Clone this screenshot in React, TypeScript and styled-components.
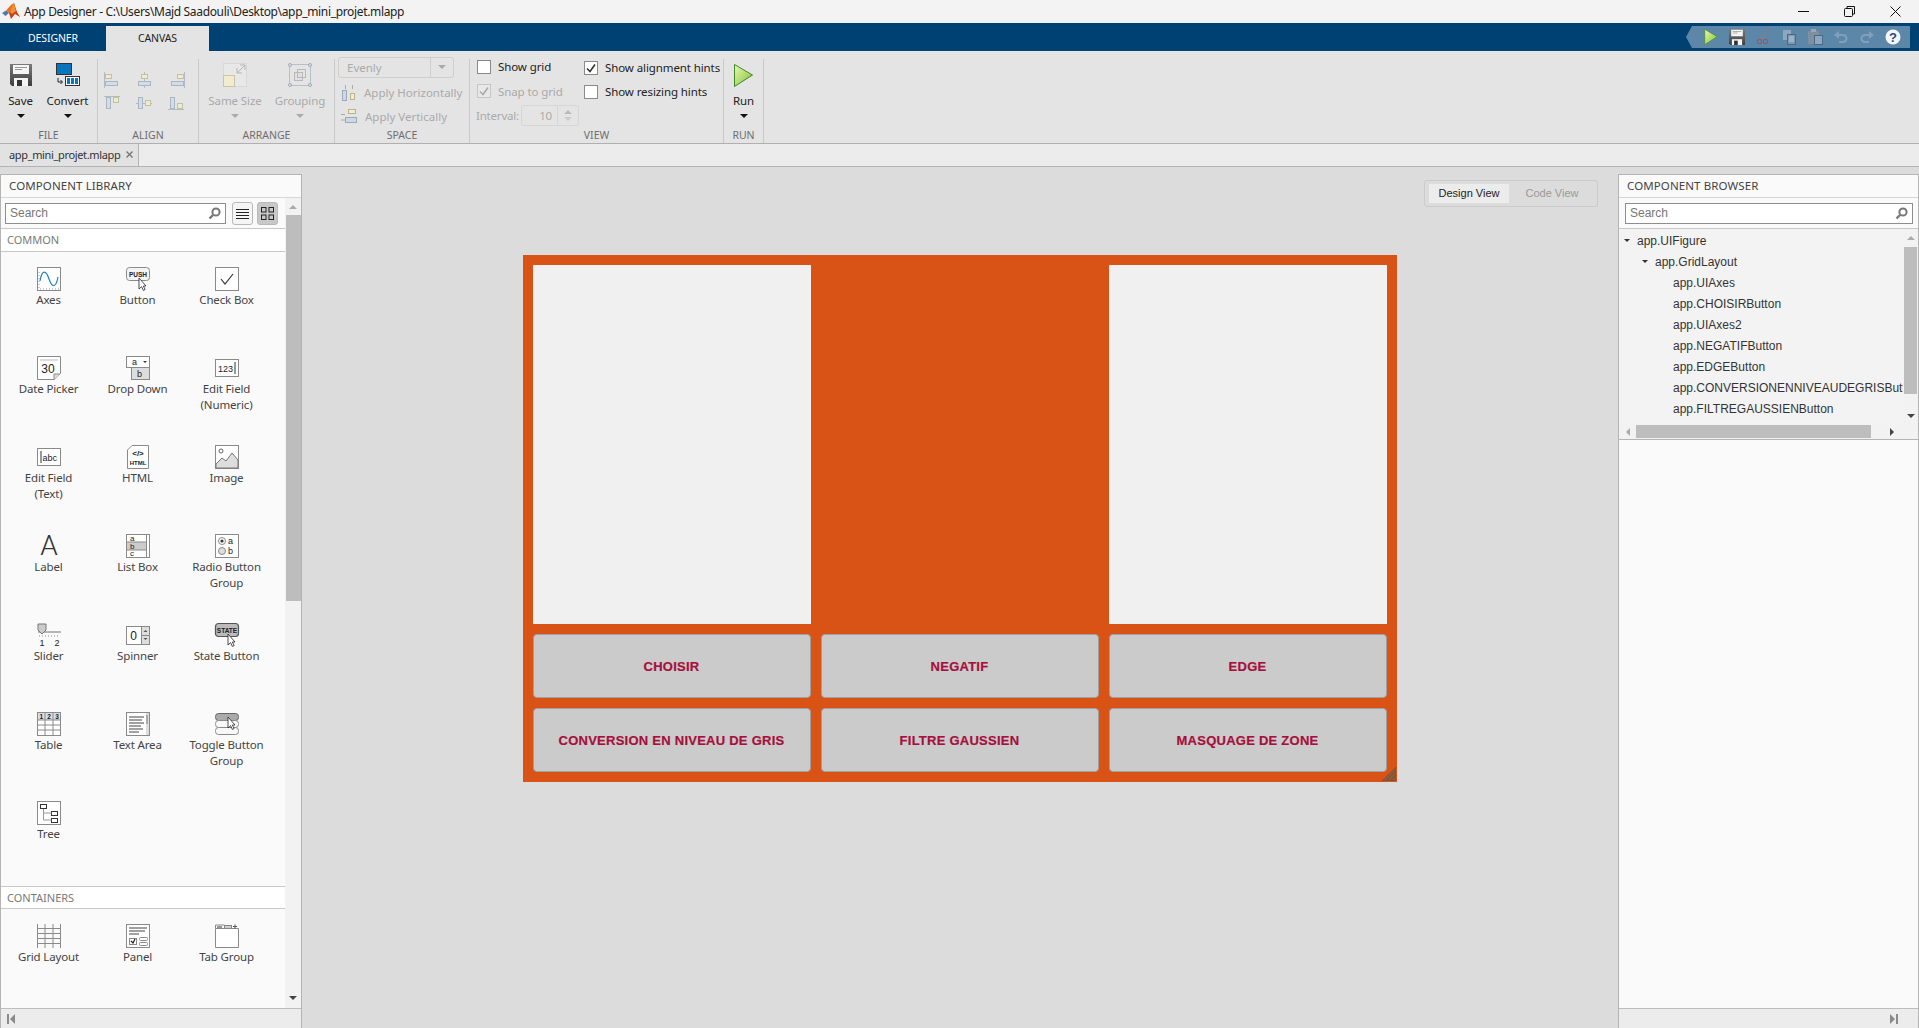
import React from "react";
import styled, { createGlobalStyle } from "styled-components";

const GlobalStyle = createGlobalStyle`
  html, body { margin: 0; padding: 0; overflow: hidden; background: #dcdcdc; }
  * { box-sizing: border-box; }
`;

const ui = `"Noto Sans", "Open Sans", sans-serif`;
const arial = `"Liberation Sans", Arial, sans-serif`;

// ------------------- SHELL ------------------------------------

const Page = styled.div`
  width: 1919px;
  height: 1028px;
  display: flex;
  flex-direction: column;
  overflow: hidden;
  font-family: ${ui};
  font-size: 12px;
  color: #222;
`;

const TitleBar = styled.div`
  height: 23px;
  flex: none;
  display: flex;
  align-items: center;
  background: #f3f3f3;
  padding-left: 2px;
`;

const TitleText = styled.span`
  margin-left: 4px;
  font-size: 12px;
  letter-spacing: -0.34px;
  color: #222;
  white-space: nowrap;
`;

const WindowControls = styled.div`
  margin-left: auto;
  display: flex;
  align-items: center;
  height: 100%;
  padding-right: 1px;
`;

const WindowButton = styled.div`
  width: 46px;
  height: 100%;
  display: flex;
  align-items: center;
  justify-content: center;
`;

const TabBar = styled.div`
  height: 28px;
  flex: none;
  display: flex;
  align-items: flex-end;
  background: #004173;
`;

const TabItem = styled.div<{ $active?: boolean; $w: number }>`
  width: ${({ $w }) => $w}px;
  height: 25px;
  display: flex;
  align-items: center;
  justify-content: center;
  padding-bottom: 2px;
  font-size: 10.5px;
  letter-spacing: -0.1px;
  color: ${({ $active }) => ($active ? "#222" : "#fff")};
  background: ${({ $active }) => ($active ? "#e4e4e4" : "transparent")};
`;

const QuickBar = styled.div`
  position: relative;
  margin-left: auto;
  margin-right: 9px;
  margin-bottom: 3px;
  width: 218px;
  height: 22px;
  display: flex;
  align-items: center;
  padding-left: 6px;
  background: #5d87a9;
  &::before {
    content: "";
    position: absolute;
    left: -6px;
    top: 0;
    border-style: solid;
    border-width: 11px 6px 11px 0;
    border-color: transparent #5d87a9 transparent transparent;
  }
`;

const QuickSlot = styled.div`
  width: 26px;
  height: 22px;
  display: flex;
  align-items: center;
  justify-content: center;
`;

// ------------------- RIBBON ------------------------------------

const Ribbon = styled.div`
  height: 93px;
  flex: none;
  display: flex;
  background: #e4e4e4;
  border-bottom: 1px solid #b0b0b0;
`;

const Section = styled.div<{ $w: number }>`
  width: ${({ $w }) => $w}px;
  margin-top: 8px;
  display: flex;
  flex-direction: column;
  border-right: 1px solid #c9c9c9;
`;

const SectionBody = styled.div<{ $pad?: string }>`
  height: 69px;
  flex: none;
  display: flex;
  padding: ${({ $pad }) => $pad || "0"};
`;

const SectionTitle = styled.div`
  height: 15px;
  line-height: 15px;
  text-align: center;
  font-size: 10.5px;
  color: #6e6e6e;
`;

const BigButton = styled.div<{ $w: number; $off?: boolean }>`
  width: ${({ $w }) => $w}px;
  display: flex;
  flex-direction: column;
  align-items: center;
  padding-top: 3px;
  color: ${({ $off }) => ($off ? "#aaa" : "#222")};
`;

const IconBox = styled.div`
  height: 26px;
  display: flex;
  align-items: center;
  justify-content: center;
`;

const BigLabel = styled.div`
  margin-top: 5px;
  height: 16px;
  line-height: 16px;
  font-size: 11.5px;
  letter-spacing: -0.1px;
  white-space: nowrap;
`;

const Caret = styled.div<{ $off?: boolean }>`
  margin-top: 5px;
  width: 0;
  height: 0;
  border-style: solid;
  border-width: 4px 4px 0 4px;
  border-color: ${({ $off }) => ($off ? "#aaa" : "#111")} transparent transparent transparent;
`;

const AlignGrid = styled.div`
  display: grid;
  grid-template-columns: repeat(3, 32px);
  grid-auto-rows: 23px;
  padding: 9px 0 0 5px;
  justify-items: start;
  align-items: center;
  align-content: start;
`;

const SpaceCol = styled.div`
  display: flex;
  flex-direction: column;
`;

const SelectBox = styled.div`
  width: 116px;
  height: 21px;
  display: flex;
  align-items: center;
  border: 1px solid #cfcfcf;
  border-radius: 3px;
  color: #aaa;
  font-size: 11.5px;
  padding-left: 8px;
  margin-top: -2px;
  margin-bottom: 3px;
`;

const SelectArrow = styled.div`
  margin-left: auto;
  width: 23px;
  height: 100%;
  display: flex;
  align-items: center;
  justify-content: center;
  border-left: 1px solid #cfcfcf;
`;

const SpaceRow = styled.div`
  height: 24px;
  display: flex;
  align-items: center;
  gap: 8px;
  padding-left: 3px;
  color: #aaa;
  font-size: 11.5px;
  white-space: nowrap;
`;

const ViewCol = styled.div<{ $w: number }>`
  width: ${({ $w }) => $w}px;
  display: flex;
  flex-direction: column;
`;

const CheckRow = styled.label<{ $off?: boolean; $h: number; $top?: number }>`
  height: ${({ $h }) => $h}px;
  margin-top: ${({ $top }) => $top || 0}px;
  flex: none;
  display: flex;
  align-items: center;
  gap: 7px;
  font-size: 11.5px;
  letter-spacing: -0.1px;
  white-space: nowrap;
  color: ${({ $off }) => ($off ? "#aaa" : "#222")};
`;

const CheckSquare = styled.span<{ $off?: boolean }>`
  width: 14px;
  height: 14px;
  flex: none;
  display: flex;
  align-items: center;
  justify-content: center;
  background: ${({ $off }) => ($off ? "#e8e8e8" : "#fff")};
  border: 1px solid ${({ $off }) => ($off ? "#c6c6c6" : "#8a8a8a")};
`;

const IntervalRow = styled.div`
  height: 22px;
  margin-top: 3px;
  flex: none;
  display: flex;
  align-items: center;
  gap: 2px;
  margin-left: -1px;
  color: #aaa;
  font-size: 11.5px;
  letter-spacing: -0.2px;
`;

const Spinner = styled.div`
  width: 58px;
  height: 21px;
  flex: none;
  display: flex;
  align-items: center;
  justify-content: flex-end;
  border: 1px solid #d6d6d6;
  border-radius: 3px;
  color: #aaa;
  font-family: ${ui};
`;

const SpinnerArrows = styled.div`
  width: 21px;
  height: 100%;
  margin-left: 5px;
  border-left: 1px solid #d6d6d6;
  display: flex;
  flex-direction: column;
  align-items: center;
  justify-content: center;
  gap: 3px;
`;

const DocBar = styled.div`
  height: 23px;
  flex: none;
  display: flex;
  background: #ececec;
  border-bottom: 1px solid #b4b4b4;
`;

const DocTab = styled.div`
  width: 139px;
  height: 22px;
  display: flex;
  align-items: center;
  gap: 6px;
  padding: 0 0 2px 9px;
  background: #e2e2e2;
  border-right: 1px solid #b4b4b4;
  font-size: 11px;
  letter-spacing: -0.35px;
  color: #333;
  white-space: nowrap;
`;

// ------------------- MAIN ------------------------------------

const Main = styled.div`
  flex: 1;
  min-height: 0;
  display: flex;
  padding-top: 7px;
  background: #dcdcdc;
`;

const Panel = styled.div<{ $w: number }>`
  width: ${({ $w }) => $w}px;
  flex: none;
  display: flex;
  flex-direction: column;
  background: #fafafa;
  border: 1px solid #b4b4b4;
  border-bottom: none;
`;

const PanelHeader = styled.div`
  height: 23px;
  flex: none;
  padding-left: 8px;
  line-height: 22px;
  font-size: 11.5px;
  color: #444;
  border-bottom: 1px solid #d6d6d6;
  letter-spacing: 0.1px;
`;

const SearchRow = styled.div<{ $left: number }>`
  height: 31px;
  flex: none;
  display: flex;
  align-items: center;
  padding-left: ${({ $left }) => $left}px;
  border-bottom: 1px solid #c8c8c8;
  background: #fafafa;
`;

const SearchBox = styled.div<{ $w: number }>`
  width: ${({ $w }) => $w}px;
  height: 21px;
  display: flex;
  align-items: center;
  justify-content: space-between;
  padding: 0 4px;
  background: #fff;
  border: 1px solid #8e8e8e;
  font-family: ${arial};
  font-size: 12px;
  color: #777;
`;

const ViewSwitch = styled.div<{ $on?: boolean }>`
  width: 21px;
  height: 23px;
  display: flex;
  align-items: center;
  justify-content: center;
  margin-left: ${({ $on }) => ($on ? "4px" : "6px")};
  border: 1px solid #b9b9b9;
  border-radius: 3px;
  background: ${({ $on }) => ($on ? "#c8c8c8" : "#f5f5f5")};
`;

const LibraryBody = styled.div`
  flex: 1;
  min-height: 0;
  display: flex;
`;

const LibraryList = styled.div`
  flex: 1;
  min-width: 0;
`;

const GroupHeader = styled.div<{ $first?: boolean }>`
  height: 23px;
  padding-left: 6px;
  line-height: 22px;
  font-size: 11px;
  color: #7a7a7a;
  background: #fff;
  border-bottom: 1px solid #c8c8c8;
  border-top: ${({ $first }) => ($first ? "none" : "1px solid #c8c8c8")};
`;

const LibraryGrid = styled.div<{ $h: number }>`
  height: ${({ $h }) => $h}px;
  display: grid;
  grid-template-columns: repeat(3, 89px);
  grid-auto-rows: 89px;
  padding: 15px 0 0 3px;
`;

const LibraryItem = styled.div`
  display: flex;
  flex-direction: column;
  align-items: center;
`;

const ItemLabel = styled.div`
  margin-top: 1px;
  text-align: center;
  line-height: 16px;
  font-size: 11.5px;
  letter-spacing: -0.15px;
  color: #444;
`;

const VTrack = styled.div<{ $w: number }>`
  width: ${({ $w }) => $w}px;
  flex: none;
  display: flex;
  flex-direction: column;
  align-items: center;
  background: #f2f2f2;
`;

const ArrowCell = styled.div<{ $h: number; $w?: number }>`
  height: ${({ $h }) => $h}px;
  width: ${({ $w }) => ($w ? `${$w}px` : "auto")};
  flex: none;
  display: flex;
  align-items: center;
  justify-content: center;
`;

const VThumb = styled.div<{ $h: number; $w: number }>`
  width: ${({ $w }) => $w}px;
  height: ${({ $h }) => $h}px;
  flex: none;
  background: #bdbdbd;
`;

const Tri = styled.div<{ $dir: "up" | "down" | "left" | "right"; $c?: string; $s?: number }>`
  width: 0;
  height: 0;
  border-style: solid;
  ${({ $dir, $c = "#888", $s = 4 }) => {
    if ($dir === "up") return `border-width: 0 ${$s}px ${$s}px ${$s}px; border-color: transparent transparent ${$c} transparent;`;
    if ($dir === "down") return `border-width: ${$s}px ${$s}px 0 ${$s}px; border-color: ${$c} transparent transparent transparent;`;
    if ($dir === "left") return `border-width: ${$s}px ${$s}px ${$s}px 0; border-color: transparent ${$c} transparent transparent;`;
    return `border-width: ${$s}px 0 ${$s}px ${$s}px; border-color: transparent transparent transparent ${$c};`;
  }}
`;

const PanelFooter = styled.div<{ $end?: boolean }>`
  height: 20px;
  flex: none;
  display: flex;
  align-items: center;
  justify-content: ${({ $end }) => ($end ? "flex-end" : "flex-start")};
  gap: 1px;
  padding: 0 20px 0 6px;
  background: #ececec;
  border-top: 1px solid #bdbdbd;
`;

const EndBar = styled.div`
  width: 2px;
  height: 10px;
  background: #8a8a8a;
`;

const CanvasArea = styled.div`
  flex: 1;
  min-width: 0;
  margin: 0 -1px;
  padding-top: 6px;
  display: flex;
  flex-direction: column;
  align-items: center;
`;

const ViewToggle = styled.div`
  align-self: flex-end;
  margin-right: 21px;
  width: 174px;
  height: 27px;
  display: flex;
  align-items: center;
  gap: 3px;
  padding-left: 4px;
  border: 1px solid #cbcbcb;
  border-radius: 3px;
  font-family: ${arial};
  font-size: 11px;
`;

const ToggleOption = styled.div<{ $on?: boolean }>`
  width: 80px;
  height: 19px;
  line-height: 19px;
  text-align: center;
  background: ${({ $on }) => ($on ? "#ececec" : "transparent")};
  color: ${({ $on }) => ($on ? "#222" : "#999")};
`;

const Figure = styled.div`
  position: relative;
  margin-top: 48px;
  margin-right: 1px;
  width: 874px;
  height: 527px;
  display: grid;
  grid-template-columns: repeat(3, 278px);
  grid-template-rows: 359px 64px 64px;
  gap: 10px;
  padding: 10px;
  background: #da5316;
`;

const AxesBox = styled.div<{ $col: number }>`
  grid-column: ${({ $col }) => $col};
  background: #f0f0f0;
`;

const PushButton = styled.div`
  display: flex;
  align-items: center;
  justify-content: center;
  background: #cbcbcb;
  border: 1px solid #a0a0a0;
  border-radius: 4px;
  font-family: ${arial};
  font-weight: 700;
  font-size: 13px;
  letter-spacing: 0.25px;
  -webkit-text-stroke: 0.2px #a5103c;
  color: #a5103c;
  white-space: nowrap;
`;

const ResizeGrip = styled.svg`
  position: absolute;
  right: 1px;
  bottom: 1px;
`;

const TreePane = styled.div`
  height: 211px;
  flex: none;
  display: flex;
  flex-direction: column;
  background: #f3f3f3;
  border-bottom: 1px solid #b4b4b4;
`;

const TreeMain = styled.div`
  flex: 1;
  min-height: 0;
  display: flex;
`;

const TreeList = styled.div`
  flex: 1;
  min-width: 0;
  padding-top: 1px;
  overflow: hidden;
`;

const TreeRow = styled.div<{ $level: number }>`
  height: 21px;
  display: flex;
  align-items: center;
  gap: 6px;
  padding-left: ${({ $level }) => 5 + $level * 18}px;
  font-family: ${arial};
  font-size: 12px;
  color: #333;
  white-space: nowrap;
`;

const TreeTwist = styled.span`
  display: inline-block;
  width: 7px;
  flex: none;
`;

const HScroll = styled.div`
  height: 15px;
  flex: none;
  display: flex;
  align-items: center;
  background: #f2f2f2;
`;

const HThumb = styled.div`
  width: 235px;
  height: 13px;
  background: #bdbdbd;
`;

const PanelFill = styled.div`
  flex: 1;
`;

const IconSvg = styled.svg`
  display: block;
  flex: none;
  overflow: visible;
`;

// ------------------- ICONS ------------------------------------

const Svg = ({ s = 24, w, h, children }: { s?: number; w?: number; h?: number; children: React.ReactNode }) => (
  <IconSvg width={w || s} height={h || s} viewBox={`0 0 ${w || s} ${h || s}`}>
    {children}
  </IconSvg>
);

const tiny = { fontFamily: arial, fill: "#222" } as const;

const Logo = () => (
  <Svg s={18}>
    <polygon points="0,10 4,7.5 7,10 3.5,13" fill="#3f7fb8" />
    <polygon points="4,7.5 9,2 12,0 8,9 7,10" fill="#e8701f" />
    <polygon points="12,0 15,9 18,14 13,11 9,16 7,10 9,7" fill="#c8401a" />
    <polygon points="12,0 14,8 10,11 8,9" fill="#f09030" />
  </Svg>
);

const FloppyIcon = ({ s = 22 }: { s?: number }) => (
  <IconSvg width={s} height={s} viewBox="0 0 22 22">
    <defs>
      <linearGradient id="floppy" x1="0" y1="0" x2="0" y2="1">
        <stop offset="0" stopColor="#7a7a7a" />
        <stop offset="1" stopColor="#3e3e3e" />
      </linearGradient>
    </defs>
    <path d="M0 0h22v22H2l-2-2z" fill="url(#floppy)" />
    <rect x="3" y="1" width="16" height="9" fill="#f4f4f4" />
    <rect x="5" y="3" width="12" height="1" fill="#999" />
    <rect x="5" y="5" width="7" height="1" fill="#999" />
    <rect x="4" y="14" width="14" height="8" fill="#f4f4f4" />
    <rect x="7" y="16" width="5" height="6" fill="#333" />
  </IconSvg>
);

const ConvertIcon = () => (
  <Svg s={24}>
    <rect x="0.5" y="0.5" width="15" height="11" fill="#0a76bd" stroke="#333" />
    <path d="M2 15v4h4M4.5 17l2 2-2 2" fill="none" stroke="#222" />
    <rect x="9.5" y="13.5" width="14" height="9" fill="#fff" stroke="#333" />
    <rect x="11" y="15" width="3" height="6" fill="#0a76bd" />
    <rect x="15" y="15" width="3" height="6" fill="#0a76bd" />
    <rect x="19" y="15" width="3" height="6" fill="#0a76bd" />
  </Svg>
);

// one of the six greyed align glyphs: a rule plus a pale and a blue block
const AlignIcon = ({ v, a }: { v: boolean; a: number }) => {
  const yellow = { fill: "#f0ead0", stroke: "#c4c0a4" };
  const blue = { fill: "#d4dde6", stroke: "#a9b6c3" };
  if (!v) {
    const rx = a === 0 ? 1 : a === 1 ? 9 : 17;
    const bx = a === 0 ? 2 : a === 1 ? 3 : 4;
    const yx = a === 0 ? 2 : a === 1 ? 6 : 10;
    return (
      <Svg w={18} h={18}>
        <rect x={rx} y="1" width="1" height="16" fill="#b3bcc5" />
        <rect x={yx + 0.5} y="3.5" width="6" height="4" {...yellow} />
        <rect x={bx + 0.5} y="10.5" width="12" height="4" {...blue} />
      </Svg>
    );
  }
  const ry = a === 0 ? 2 : a === 1 ? 9 : 15;
  const yy = a === 0 ? 3 : a === 1 ? 6 : 9;
  return (
    <Svg w={18} h={18}>
      <rect x="1" y={ry} width="16" height="1" fill="#b3bcc5" />
      <rect x="3.5" y="3.5" width="4" height="11" {...blue} />
      <rect x="10.5" y={yy + 0.5} width="5" height="5" {...yellow} />
    </Svg>
  );
};

const SameSizeIcon = () => (
  <Svg s={24}>
    <rect x="0.5" y="0.5" width="23" height="23" fill="#e8e8e8" stroke="#d8d8d8" />
    <rect x="0.5" y="12.5" width="11" height="11" fill="#f1ebcf" stroke="#c9c4a6" />
    <path d="M14 10l8-8M17 2h5v5M14 5v5h5" fill="none" stroke="#b5b5b5" />
  </Svg>
);

const GroupingIcon = () => (
  <Svg s={24}>
    <rect x="1.5" y="1.5" width="21" height="21" fill="none" stroke="#b7c0c9" />
    <rect x="6.5" y="9.5" width="8" height="8" fill="#e0e0e0" stroke="#b9b9b9" />
    <rect x="9.5" y="6.5" width="8" height="8" fill="none" stroke="#b9b9b9" />
    <circle cx="2" cy="2" r="1.5" fill="#dde" stroke="#a0acb8" />
    <circle cx="22" cy="2" r="1.5" fill="#dde" stroke="#a0acb8" />
    <circle cx="2" cy="22" r="1.5" fill="#dde" stroke="#a0acb8" />
    <circle cx="22" cy="22" r="1.5" fill="#dde" stroke="#a0acb8" />
  </Svg>
);

const ApplyHIcon = () => (
  <Svg w={15} h={16}>
    <path d="M4.5 0v4M11.5 0v4" stroke="#aaa" />
    <rect x="1.5" y="5.5" width="4" height="10" fill="#cdd9e4" stroke="#9aaaba" />
    <rect x="9.5" y="8.5" width="4" height="6" fill="#f3eccb" stroke="#b9b490" />
  </Svg>
);

const ApplyVIcon = () => (
  <Svg w={16} h={15}>
    <path d="M0 5.5h4M0 11h4" stroke="#aaa" />
    <rect x="7.5" y="0.5" width="7" height="4" fill="#f3eccb" stroke="#b9b490" />
    <rect x="4.5" y="8.5" width="11" height="5" fill="#cdd9e4" stroke="#9aaaba" />
  </Svg>
);

const Check = ({ c = "#333" }: { c?: string }) => (
  <svg width="12" height="12" viewBox="0 0 12 12">
    <path d="M2 6.5l3 3 5-7" fill="none" stroke={c} strokeWidth="1.6" />
  </svg>
);

const PlayIcon = ({ w = 19, h = 23 }: { w?: number; h?: number }) => (
  <IconSvg width={w} height={h} viewBox="0 0 19 23">
    <defs>
      <linearGradient id="runfill" x1="0" y1="0" x2="1" y2="1">
        <stop offset="0" stopColor="#eaf7b8" />
        <stop offset="1" stopColor="#7fc02c" />
      </linearGradient>
    </defs>
    <path d="M0.5 0.5L18.5 11 0.5 22.5z" fill="url(#runfill)" stroke="#3d8a26" />
  </IconSvg>
);

const SearchGlass = () => (
  <Svg s={13}>
    <circle cx="8" cy="5" r="3.6" fill="none" stroke="#777" strokeWidth="2" />
    <path d="M5 8L1.5 11.5" stroke="#777" strokeWidth="2.4" />
  </Svg>
);

const QuickCut = () => (
  <Svg w={14} h={16}>
    <path d="M11 0L6 10M5 5l3 5" stroke="#7d7f8c" fill="none" />
    <circle cx="3.5" cy="12.5" r="2.3" fill="none" stroke="#a0505a" />
    <circle cx="9.5" cy="12.5" r="2.3" fill="none" stroke="#a0505a" />
  </Svg>
);

const QuickCopy = () => (
  <Svg w={13} h={15}>
    <rect x="0" y="0" width="8" height="10" fill="#8ea7bd" />
    <rect x="4.5" y="4.5" width="8" height="10" fill="#7d98b0" stroke="#47698a" />
    <path d="M6 7h5M6 9h5M6 11h5" stroke="#bcd" />
  </Svg>
);

const QuickPaste = () => (
  <Svg w={15} h={16}>
    <rect x="0" y="2" width="11" height="13" fill="#7f8f9e" />
    <rect x="3" y="0" width="5" height="3" fill="#9aa8b5" />
    <rect x="6.5" y="6.5" width="8" height="9" fill="#8ea7bd" stroke="#47698a" />
  </Svg>
);

const UndoSvg = styled.svg<{ $flip?: boolean }>`
  display: block;
  transform: ${({ $flip }) => ($flip ? "scaleX(-1)" : "none")};
`;

const QuickUndo = ({ flip }: { flip?: boolean }) => (
  <UndoSvg $flip={flip} width="14" height="13" viewBox="0 0 14 13">
    <path d="M3 4h6a3.5 3.5 0 0 1 0 7H5" fill="none" stroke="#7fa0bb" strokeWidth="2" />
    <path d="M5 0v8L0 4z" fill="#7fa0bb" />
  </UndoSvg>
);

const QuickHelp = () => (
  <Svg s={16}>
    <circle cx="8" cy="8" r="7.5" fill="#f4f6fa" />
    <text x="8" y="12.5" textAnchor="middle" fontFamily={arial} fontWeight="700" fontSize="13" fill="#2a4a7a">?</text>
  </Svg>
);

const Cursor = ({ x, y }: { x: number; y: number }) => (
  <path
    d={`M${x} ${y}v11l2.6-2.4 1.7 3.8 1.8-.8-1.7-3.6H${x + 7}z`}
    fill="#fff"
    stroke="#222"
    strokeWidth="0.8"
  />
);

const Frame = ({ x = 0.5, y = 0.5, w = 23, h = 23, fill = "#fff" }: { x?: number; y?: number; w?: number; h?: number; fill?: string }) => (
  <rect x={x} y={y} width={w} height={h} fill={fill} stroke="#8a8a8a" />
);

const icons: Record<string, React.ReactNode> = {
  Axes: (
    <>
      <Frame />
      <path d="M3 14C5 2 9 3 12 12s7 9 9-2" fill="none" stroke="#1d7fc4" strokeWidth="1.2" />
      <path d="M2 5v17h20" fill="none" stroke="#999" strokeDasharray="1 2" />
    </>
  ),
  Button: (
    <>
      <rect x="0.5" y="0.5" width="23" height="13" rx="3" fill="#f4f4f4" stroke="#8a8a8a" />
      <text x="12" y="9.5" textAnchor="middle" fontSize="6.5" fontWeight="700" {...tiny}>PUSH</text>
      <Cursor x={13} y={11} />
    </>
  ),
  "Check Box": (
    <>
      <Frame />
      <path d="M6 12l4 5 8-10" fill="none" stroke="#333" strokeWidth="1.2" />
    </>
  ),
  "Date Picker": (
    <>
      <path d="M0.5 0.5h23v17l-6 6H0.5z" fill="#fff" stroke="#8a8a8a" />
      <path d="M3 4h18" stroke="#bbb" />
      <path d="M23 18h-6v6" fill="#ddd" stroke="#8a8a8a" />
      <text x="11" y="17" textAnchor="middle" fontSize="12" {...tiny}>30</text>
    </>
  ),
  "Drop Down": (
    <>
      <rect x="0.5" y="0.5" width="23" height="11" fill="#fff" stroke="#8a8a8a" />
      <rect x="5.5" y="11.5" width="18" height="12" fill="#ddd" stroke="#8a8a8a" />
      <text x="6" y="9" fontSize="9" {...tiny}>a</text>
      <text x="11" y="21" fontSize="9" {...tiny}>b</text>
      <path d="M17 5h4l-2 2z" fill="#333" />
    </>
  ),
  "Edit Field (Numeric)": (
    <>
      <rect x="0.5" y="3.5" width="23" height="17" fill="#fff" stroke="#8a8a8a" />
      <text x="3" y="15.5" fontSize="9" {...tiny}>123</text>
      <path d="M20 6v12" stroke="#333" />
    </>
  ),
  "Edit Field (Text)": (
    <>
      <rect x="0.5" y="3.5" width="23" height="17" fill="#fff" stroke="#8a8a8a" />
      <path d="M4 6v12" stroke="#333" />
      <text x="5.5" y="15.5" fontSize="9" {...tiny}>abc</text>
    </>
  ),
  HTML: (
    <>
      <path d="M6 0.5h16.5v23H1.5V5z" fill="#fff" stroke="#8a8a8a" />
      <text x="12" y="11" textAnchor="middle" fontSize="8" fontWeight="700" {...tiny}>&lt;/&gt;</text>
      <text x="12" y="20" textAnchor="middle" fontSize="6" fontWeight="700" {...tiny}>HTML</text>
    </>
  ),
  Image: (
    <>
      <Frame />
      <circle cx="6" cy="6" r="2" fill="none" stroke="#666" />
      <path d="M1 19l6-6 4 3 6-8 6 7v8H1z" fill="#ddd" stroke="#777" />
    </>
  ),
  Label: (
    <text x="12" y="21" textAnchor="middle" fontFamily={`Roboto, ${arial}`} fontWeight="300" fontSize="28" fill="#333">
      A
    </text>
  ),
  "List Box": (
    <>
      <Frame />
      <rect x="1" y="8" width="19" height="8" fill="#ccc" />
      <path d="M1 8h19M1 16h19M20.5 1v22" stroke="#8a8a8a" />
      <text x="4" y="7" fontSize="8" {...tiny}>a</text>
      <text x="4" y="15" fontSize="8" {...tiny}>b</text>
      <text x="4" y="22" fontSize="8" {...tiny}>c</text>
    </>
  ),
  "Radio Button Group": (
    <>
      <Frame />
      <circle cx="7" cy="7" r="3.5" fill="#fff" stroke="#888" />
      <circle cx="7" cy="7" r="1.6" fill="#333" />
      <circle cx="7" cy="17" r="3.5" fill="#ddd" stroke="#888" />
      <text x="13" y="10" fontSize="9" {...tiny}>a</text>
      <text x="13" y="20" fontSize="9" {...tiny}>b</text>
    </>
  ),
  Slider: (
    <>
      <path d="M1 9h23" stroke="#999" strokeWidth="1.4" />
      <path d="M1 1h8v6l-4 4-4-4z" fill="#ccc" stroke="#777" />
      <path d="M2 13h20" stroke="#888" strokeDasharray="1 2" />
      <text x="5" y="23" textAnchor="middle" fontSize="9" {...tiny}>1</text>
      <text x="20" y="23" textAnchor="middle" fontSize="9" {...tiny}>2</text>
    </>
  ),
  Spinner: (
    <>
      <rect x="0.5" y="3.5" width="23" height="18" fill="#fff" stroke="#8a8a8a" />
      <rect x="15.5" y="3.5" width="8" height="18" fill="#ddd" stroke="#8a8a8a" />
      <path d="M16 12.5h7" stroke="#8a8a8a" />
      <path d="M17.5 9l2-2 2 2zM17.5 15l2 2 2-2z" fill="#555" />
      <text x="7.5" y="17" textAnchor="middle" fontSize="12" {...tiny}>0</text>
    </>
  ),
  "State Button": (
    <>
      <rect x="0.5" y="0.5" width="23" height="13" rx="3" fill="#bbb" stroke="#555" strokeWidth="1.2" />
      <text x="12" y="9.5" textAnchor="middle" fontSize="6.5" fontWeight="700" {...tiny}>STATE</text>
      <Cursor x={13} y={11} />
    </>
  ),
  Table: (
    <>
      <rect x="0.5" y="0.5" width="23" height="23" fill="#fff" stroke="#8a8a8a" />
      <rect x="1" y="1" width="22" height="7" fill="#ddd" />
      <path d="M8 0.5v23M16 0.5v23M0.5 8h23M0.5 13h23M0.5 18h23" stroke="#8a8a8a" />
      <text x="4.2" y="7" textAnchor="middle" fontSize="6.5" fontWeight="700" {...tiny}>1</text>
      <text x="12" y="7" textAnchor="middle" fontSize="6.5" fontWeight="700" {...tiny}>2</text>
      <text x="20" y="7" textAnchor="middle" fontSize="6.5" fontWeight="700" {...tiny}>3</text>
    </>
  ),
  "Text Area": (
    <>
      <Frame />
      <rect x="20" y="1" width="3" height="22" fill="#ddd" />
      <path d="M3 5h15M3 8h13M3 11h15M3 14h12M3 17h14M3 20h10" stroke="#444" />
      <path d="M21 3v9" stroke="#777" />
    </>
  ),
  "Toggle Button Group": (
    <>
      <rect x="0.5" y="1.5" width="23" height="7" rx="3" fill="#aaa" stroke="#666" />
      <rect x="0.5" y="8.5" width="23" height="7" rx="3" fill="#f8f8f8" stroke="#8a8a8a" />
      <rect x="0.5" y="15.5" width="23" height="7" rx="3" fill="#f8f8f8" stroke="#8a8a8a" />
      <Cursor x={13} y={5} />
    </>
  ),
  Tree: (
    <>
      <Frame />
      <rect x="3.5" y="3.5" width="6" height="4" fill="#fff" stroke="#333" />
      <rect x="14.5" y="10.5" width="6" height="4" fill="#fff" stroke="#333" />
      <rect x="14.5" y="17.5" width="6" height="4" fill="#fff" stroke="#333" />
      <path d="M6.5 8v11h8M6.5 12h8" fill="none" stroke="#999" />
    </>
  ),
  "Grid Layout": (
    <path d="M0 4.5h24M0 9.5h24M0 14.5h24M0 19.5h24M0.5 0v24M8 0v24M16 0v24M23.5 0v24" stroke="#8a8a8a" />
  ),
  Panel: (
    <>
      <Frame />
      <path d="M3 4h18M3 7h16M3 10h10" stroke="#444" />
      <rect x="3.5" y="14.5" width="7" height="6" fill="#fff" stroke="#888" />
      <path d="M5 17l2 2 2-4" fill="none" stroke="#222" strokeWidth="1.2" />
      <rect x="13.5" y="13.5" width="8" height="3" rx="1" fill="#fff" stroke="#888" />
      <rect x="13.5" y="18.5" width="8" height="3" rx="1" fill="#fff" stroke="#888" />
    </>
  ),
  "Tab Group": (
    <>
      <path d="M0.5 4.5h23v19H0.5z" fill="#fff" stroke="#8a8a8a" />
      <path d="M0.5 4.5V1h9" fill="none" stroke="#8a8a8a" />
      <path d="M2 3h5" stroke="#333" />
      <rect x="9.5" y="1.5" width="7" height="3" fill="#ccc" stroke="#888" />
      <path d="M18 2.5h4M20 0.5v4" stroke="#555" />
    </>
  ),
};

const ComponentIcon = ({ name }: { name: string }) => <Svg s={24}>{icons[name]}</Svg>;

// ------------------- DATA ------------------------------------

const common: [string, string[]][] = [
  ["Axes", ["Axes"]],
  ["Button", ["Button"]],
  ["Check Box", ["Check Box"]],
  ["Date Picker", ["Date Picker"]],
  ["Drop Down", ["Drop Down"]],
  ["Edit Field (Numeric)", ["Edit Field", "(Numeric)"]],
  ["Edit Field (Text)", ["Edit Field", "(Text)"]],
  ["HTML", ["HTML"]],
  ["Image", ["Image"]],
  ["Label", ["Label"]],
  ["List Box", ["List Box"]],
  ["Radio Button Group", ["Radio Button", "Group"]],
  ["Slider", ["Slider"]],
  ["Spinner", ["Spinner"]],
  ["State Button", ["State Button"]],
  ["Table", ["Table"]],
  ["Text Area", ["Text Area"]],
  ["Toggle Button Group", ["Toggle Button", "Group"]],
  ["Tree", ["Tree"]],
];

const containers: [string, string[]][] = [
  ["Grid Layout", ["Grid Layout"]],
  ["Panel", ["Panel"]],
  ["Tab Group", ["Tab Group"]],
];

const treeRows: { text: string; level: number; open?: boolean }[] = [
  { text: "app.UIFigure", level: 0, open: true },
  { text: "app.GridLayout", level: 1, open: true },
  { text: "app.UIAxes", level: 2 },
  { text: "app.CHOISIRButton", level: 2 },
  { text: "app.UIAxes2", level: 2 },
  { text: "app.NEGATIFButton", level: 2 },
  { text: "app.EDGEButton", level: 2 },
  { text: "app.CONVERSIONENNIVEAUDEGRISButton", level: 2 },
  { text: "app.FILTREGAUSSIENButton", level: 2 },
];

const Library = ({ items }: { items: [string, string[]][] }) => (
  <>
    {items.map(([name, lines]) => (
      <LibraryItem key={name}>
        <ComponentIcon name={name} />
        <ItemLabel>
          {lines.map((l) => (
            <div key={l}>{l}</div>
          ))}
        </ItemLabel>
      </LibraryItem>
    ))}
  </>
);

// ------------------- APP ------------------------------------

export default function App() {
  return (
    <Page>
      <GlobalStyle />
      <TitleBar>
        <Logo />
        <TitleText>App Designer - C:\Users\Majd Saadouli\Desktop\app_mini_projet.mlapp</TitleText>
        <WindowControls>
          <WindowButton>
            <Svg w={11} h={11}><path d="M0 5.5h11" stroke="#111" /></Svg>
          </WindowButton>
          <WindowButton>
            <Svg w={11} h={11}>
              <rect x="0.5" y="2.5" width="8" height="8" rx="1" fill="none" stroke="#111" />
              <path d="M3 2.5V.5h7.5V8H8.5" fill="none" stroke="#111" />
            </Svg>
          </WindowButton>
          <WindowButton>
            <Svg w={11} h={11}><path d="M.5.5l10 10M10.5.5l-10 10" stroke="#111" /></Svg>
          </WindowButton>
        </WindowControls>
      </TitleBar>

      <TabBar>
        <TabItem $w={106}>DESIGNER</TabItem>
        <TabItem $w={103} $active>CANVAS</TabItem>
        <QuickBar>
          <QuickSlot><PlayIcon w={14} h={16} /></QuickSlot>
          <QuickSlot><FloppyIcon s={16} /></QuickSlot>
          <QuickSlot><QuickCut /></QuickSlot>
          <QuickSlot><QuickCopy /></QuickSlot>
          <QuickSlot><QuickPaste /></QuickSlot>
          <QuickSlot><QuickUndo /></QuickSlot>
          <QuickSlot><QuickUndo flip /></QuickSlot>
          <QuickSlot><QuickHelp /></QuickSlot>
        </QuickBar>
      </TabBar>

      <Ribbon>
        <Section $w={98}>
          <SectionBody $pad="0 0 0 3px">
            <BigButton $w={35}>
              <IconBox><FloppyIcon /></IconBox>
              <BigLabel>Save</BigLabel>
              <Caret />
            </BigButton>
            <BigButton $w={59}>
              <IconBox><ConvertIcon /></IconBox>
              <BigLabel>Convert</BigLabel>
              <Caret />
            </BigButton>
          </SectionBody>
          <SectionTitle>FILE</SectionTitle>
        </Section>

        <Section $w={101}>
          <SectionBody>
            <AlignGrid>
              <AlignIcon v={false} a={0} />
              <AlignIcon v={false} a={1} />
              <AlignIcon v={false} a={2} />
              <AlignIcon v a={0} />
              <AlignIcon v a={1} />
              <AlignIcon v a={2} />
            </AlignGrid>
          </SectionBody>
          <SectionTitle>ALIGN</SectionTitle>
        </Section>

        <Section $w={136}>
          <SectionBody $pad="0 0 0 2px">
            <BigButton $w={68} $off>
              <IconBox><SameSizeIcon /></IconBox>
              <BigLabel>Same Size</BigLabel>
              <Caret $off />
            </BigButton>
            <BigButton $w={62} $off>
              <IconBox><GroupingIcon /></IconBox>
              <BigLabel>Grouping</BigLabel>
              <Caret $off />
            </BigButton>
          </SectionBody>
          <SectionTitle>ARRANGE</SectionTitle>
        </Section>

        <Section $w={135}>
          <SectionBody $pad="0 0 0 3px">
            <SpaceCol>
              <SelectBox>
                Evenly
                <SelectArrow><Tri $dir="down" $c="#aaa" /></SelectArrow>
              </SelectBox>
              <SpaceRow><ApplyHIcon />Apply Horizontally</SpaceRow>
              <SpaceRow><ApplyVIcon />Apply Vertically</SpaceRow>
            </SpaceCol>
          </SectionBody>
          <SectionTitle>SPACE</SectionTitle>
        </Section>

        <Section $w={254}>
          <SectionBody $pad="0 0 0 7px">
            <ViewCol $w={107}>
              <CheckRow $h={15}><CheckSquare />Show grid</CheckRow>
              <CheckRow $off $h={20} $top={7}><CheckSquare $off><Check c="#aaa" /></CheckSquare>Snap to grid</CheckRow>
              <IntervalRow>
                Interval:
                <Spinner>
                  10
                  <SpinnerArrows>
                    <Tri $dir="up" $c="#bbb" />
                    <Tri $dir="down" $c="#ccc" />
                  </SpinnerArrows>
                </Spinner>
              </IntervalRow>
            </ViewCol>
            <ViewCol $w={135}>
              <CheckRow $h={17}><CheckSquare><Check /></CheckSquare>Show alignment hints</CheckRow>
              <CheckRow $h={31}><CheckSquare />Show resizing hints</CheckRow>
            </ViewCol>
          </SectionBody>
          <SectionTitle>VIEW</SectionTitle>
        </Section>

        <Section $w={40}>
          <SectionBody>
            <BigButton $w={39}>
              <IconBox><PlayIcon /></IconBox>
              <BigLabel>Run</BigLabel>
              <Caret />
            </BigButton>
          </SectionBody>
          <SectionTitle>RUN</SectionTitle>
        </Section>
      </Ribbon>

      <DocBar>
        <DocTab>
          app_mini_projet.mlapp
          <Svg w={7} h={7}><path d="M.5.5l6 6M6.5.5l-6 6" stroke="#777" strokeWidth="1.4" /></Svg>
        </DocTab>
      </DocBar>

      <Main>
        <Panel $w={302}>
          <PanelHeader>COMPONENT LIBRARY</PanelHeader>
          <LibraryBody>
            <LibraryList>
              <SearchRow $left={4}>
                <SearchBox $w={221}>Search<SearchGlass /></SearchBox>
                <ViewSwitch>
                  <Svg s={13}><path d="M0 2.5h13M0 5.5h13M0 8.5h13M0 11.5h13" stroke="#222" /></Svg>
                </ViewSwitch>
                <ViewSwitch $on>
                  <Svg s={13}>
                    <rect x="0.5" y="0.5" width="4.5" height="4.5" fill="none" stroke="#222" />
                    <rect x="8" y="0.5" width="4.5" height="4.5" fill="none" stroke="#222" />
                    <rect x="0.5" y="8" width="4.5" height="4.5" fill="none" stroke="#222" />
                    <rect x="8" y="8" width="4.5" height="4.5" fill="none" stroke="#222" />
                  </Svg>
                </ViewSwitch>
              </SearchRow>
              <GroupHeader $first>COMMON</GroupHeader>
              <LibraryGrid $h={634}>
                <Library items={common} />
              </LibraryGrid>
              <GroupHeader>CONTAINERS</GroupHeader>
              <LibraryGrid $h={100}>
                <Library items={containers} />
              </LibraryGrid>
            </LibraryList>
            <VTrack $w={16}>
              <ArrowCell $h={17}><Tri $dir="up" $c="#aaa" /></ArrowCell>
              <VThumb $w={15} $h={386} />
              <PanelFill />
              <ArrowCell $h={21}><Tri $dir="down" $c="#444" /></ArrowCell>
            </VTrack>
          </LibraryBody>
          <PanelFooter>
            <EndBar />
            <Tri $dir="left" $c="#8a8a8a" $s={5} />
          </PanelFooter>
        </Panel>

        <CanvasArea>
          <ViewToggle>
            <ToggleOption $on>Design View</ToggleOption>
            <ToggleOption>Code View</ToggleOption>
          </ViewToggle>
          <Figure>
            <AxesBox $col={1} />
            <AxesBox $col={3} />
            <PushButton>CHOISIR</PushButton>
            <PushButton>NEGATIF</PushButton>
            <PushButton>EDGE</PushButton>
            <PushButton>CONVERSION EN NIVEAU DE GRIS</PushButton>
            <PushButton>FILTRE GAUSSIEN</PushButton>
            <PushButton>MASQUAGE DE ZONE</PushButton>
            <ResizeGrip width="14" height="14" viewBox="0 0 14 14">
              <path d="M0 14L14 0v14zM4 14l10-10M8 14l6-6" fill="#8f5a3a" stroke="#5a4a40" strokeWidth="0.5" />
            </ResizeGrip>
          </Figure>
        </CanvasArea>

        <Panel $w={301}>
          <PanelHeader>COMPONENT BROWSER</PanelHeader>
          <SearchRow $left={6}>
            <SearchBox $w={288}>Search<SearchGlass /></SearchBox>
          </SearchRow>
          <TreePane>
            <TreeMain>
              <TreeList>
                {treeRows.map((r) => (
                  <TreeRow key={r.text} $level={r.level}>
                    <TreeTwist>{r.open && <Tri $dir="down" $c="#333" $s={3.5} />}</TreeTwist>
                    {r.text}
                  </TreeRow>
                ))}
              </TreeList>
              <VTrack $w={15}>
                <ArrowCell $h={18}><Tri $dir="up" $c="#aaa" /></ArrowCell>
                <VThumb $w={13} $h={147} />
                <PanelFill />
                <ArrowCell $h={16}><Tri $dir="down" $c="#444" /></ArrowCell>
              </VTrack>
            </TreeMain>
            <HScroll>
              <ArrowCell $h={15} $w={17}><Tri $dir="left" $c="#aaa" /></ArrowCell>
              <HThumb />
              <ArrowCell $h={15} $w={42}><Tri $dir="right" $c="#444" /></ArrowCell>
            </HScroll>
          </TreePane>
          <PanelFill />
          <PanelFooter $end>
            <Tri $dir="right" $c="#8a8a8a" $s={5} />
            <EndBar />
          </PanelFooter>
        </Panel>
      </Main>
    </Page>
  );
}
